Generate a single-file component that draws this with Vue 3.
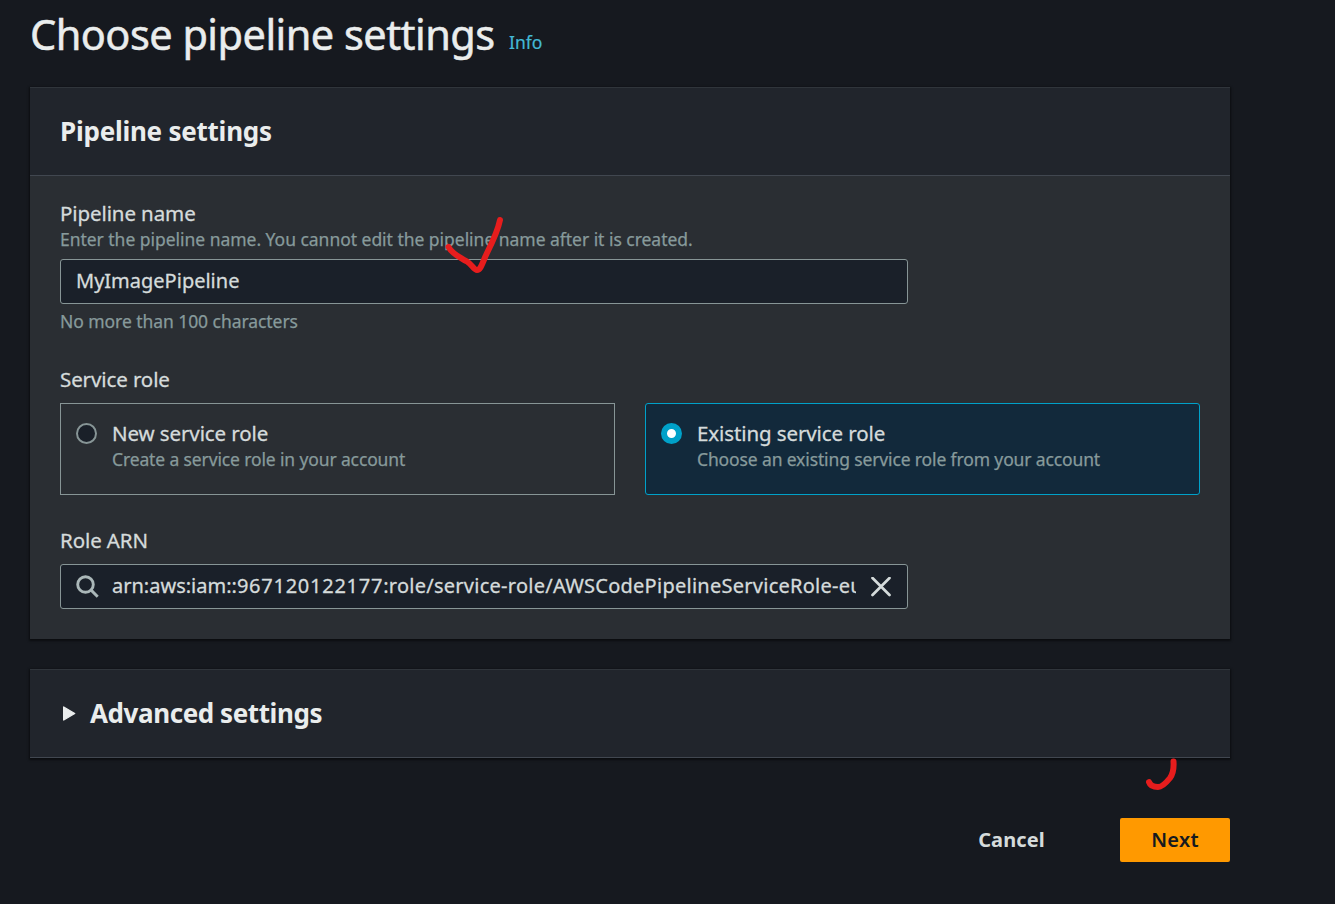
<script setup>
import { ref } from 'vue'

const name = ref('MyImagePipeline')
const role = ref('existing')
const arn = { prefix: 'arn:aws:iam::', account: '967120122177', path: ':role/service-role/AWSCodePipelineServiceRole-eu' }
const tiles = [
  { id: 'new', title: 'New service role', text: 'Create a service role in your account' },
  { id: 'existing', title: 'Existing service role', text: 'Choose an existing service role from your account' },
]
</script>

<template>
  <main class="page">
    <header class="title-row">
      <h1>Choose pipeline settings</h1>
      <a class="info">Info</a>
    </header>

    <section class="panel">
      <div class="panel-head"><h2>Pipeline settings</h2></div>
      <div class="panel-body">
        <div class="label">Pipeline name</div>
        <div class="hint name-hint">Enter the pipeline name. You cannot edit the pipeline name after it is created.</div>
        <div class="field"><span class="name-value">{{ name }}</span></div>
        <div class="hint limit">No more than 100 characters</div>

        <div class="label role-label">Service role</div>
        <div class="tiles">
          <div v-for="t in tiles" :key="t.id" class="tile" :class="{ selected: role === t.id }" @click="role = t.id">
            <span class="radio"></span>
            <div>
              <div class="label tile-title">{{ t.title }}</div>
              <div class="hint tile-text">{{ t.text }}</div>
            </div>
          </div>
        </div>

        <div class="label arn-label">Role ARN</div>
        <div class="field arn-field">
          <svg class="search" width="24" height="24" viewBox="0 0 24 24" fill="none" stroke="#aab7b8" stroke-width="2.9">
            <circle cx="9.500" cy="9.500" r="7.800" />
            <path d="M15.100 15.100L21.700 21.700" />
          </svg>
          <div class="arn-text"><span>{{ arn.prefix }}</span><span class="account">{{ arn.account }}</span><span class="path">{{ arn.path }}</span></div>
          <svg class="close" width="20" height="20" viewBox="0 0 20 20" fill="none" stroke="#d5dbdb" stroke-width="2.7" stroke-linecap="round">
            <path d="M1.500 1L18.500 18M18.500 1L1.500 18" />
          </svg>
        </div>
      </div>
    </section>

    <section class="panel advanced">
      <svg width="14" height="16" viewBox="0 0 14 16" fill="#eaeded" stroke="#eaeded" stroke-width="1.4" stroke-linejoin="round">
        <path d="M1.700 1L12.700 7.500L1.700 14Z" />
      </svg>
      <h2>Advanced settings</h2>
    </section>

    <footer class="actions">
      <button class="cancel">Cancel</button>
      <button class="next">Next</button>
    </footer>

    <svg class="ink" width="1335" height="904" viewBox="0 0 1335 904" fill="none" stroke="#e71d1d" stroke-width="6" stroke-linecap="round" stroke-linejoin="round">
      <path d="M448.500 247C452 254 461 258 467 261.500C472 264.500 474 270 477 270C481 270 483 261 487 253C492 243 498 230 500 220" />
      <path d="M1173.500 761.500C1174 769 1173 774 1170 778C1166 783 1162 787 1158 787C1153 787 1150 785 1149 782" />
    </svg>
  </main>
</template>

<style>
html, body { background: #16191f; }
body { margin: 0; overflow: hidden; }
</style>

<style scoped>
.page {
  position: relative;
  box-sizing: border-box;
  width: 1335px;
  height: 904px;
  padding: 0 105px 0 30px;
  overflow: hidden;
  background: #16191f;
  color: #d5dbdb;
  font-family: "Noto Sans", "Open Sans", sans-serif;
  white-space: nowrap;
}
h1, h2 { margin: 0; color: #eaeded; }
.title-row { display: flex; height: 87px; }
h1 { width: 479px; font-size: 41.500px; font-weight: 400; line-height: 68px; letter-spacing: -0.540px; -webkit-text-stroke: 0.500px currentColor; }
.info { color: #44b9d6; font-size: 17.500px; line-height: 85px; -webkit-text-stroke: 0.200px currentColor; }
.panel { box-shadow: 0 1px 2px 1px rgba(0, 0, 0, 0.5); }
.panel-head { box-sizing: border-box; height: 89px; padding: 0 30px; background: #21252c; border-top: 1px solid #30353b; border-bottom: 1px solid #414750; }
h2 { font-size: 26px; font-weight: 700; line-height: 86px; letter-spacing: -0.240px; }
.panel-body { box-sizing: border-box; height: 463px; padding: 24px 30px 0; background: #2a2e33; }
.label { height: 28px; font-size: 20.500px; line-height: 26px; letter-spacing: -0.100px; -webkit-text-stroke: 0.300px currentColor; }
.hint { color: #879a9b; font-size: 17.500px; line-height: 24px; letter-spacing: -0.030px; -webkit-text-stroke: 0.250px currentColor; }
.name-hint { height: 24px; line-height: 22px; }
.field { box-sizing: border-box; display: flex; align-items: center; width: 848px; height: 45px; margin-top: 7px; padding: 0 15px; border: 1px solid #879596; border-radius: 3px; background: #1a2029; font-size: 20px; line-height: 28px; -webkit-text-stroke: 0.300px currentColor; }
.name-value, .arn-text { padding-bottom: 2px; }
.limit { height: 24px; margin-top: 6px; line-height: 22px; letter-spacing: -0.060px; }
.role-label { margin-top: 32px; }
.tiles { display: grid; grid-template-columns: 1fr 1fr; gap: 30px; margin-top: 9px; }
.tile { box-sizing: border-box; display: flex; height: 92px; padding: 16px 15px; border: 1px solid #879596; }
.tile.selected { border-color: #00a1c9; border-radius: 3px; background: #12293b; }
.radio { box-sizing: border-box; flex: none; width: 21px; height: 21px; margin: 3px 15px 0 0; border: 2px solid #879596; border-radius: 50%; background: #1a2029; }
.selected .radio { border: 6px solid #00a1c9; background: #fff; }
.tile-title { height: 27px; }
.tile-text { letter-spacing: -0.130px; }
.arn-label { margin-top: 32px; }
.arn-field { margin-top: 9px; }
.search { flex: none; margin-right: 12px; stroke-width: 2.900; }
.arn-text { width: 744px; overflow: hidden; }
.account { letter-spacing: 0.750px; }
.path { letter-spacing: 0.260px; }
.close { flex: none; margin-left: 15px; }
.advanced { box-sizing: border-box; display: flex; align-items: center; gap: 14px; height: 89px; margin-top: 30px; padding-left: 32px; background: #21252c; border-top: 1px solid #30353b; border-bottom: 1px solid #414750; }
.advanced h2 { height: 87px; line-height: 86px; letter-spacing: -0.420px; }
.actions { display: flex; justify-content: flex-end; gap: 30px; margin-top: 60px; }
button { height: 44px; width: 110px; padding: 0; border: 0; border-radius: 2px; font: 700 20px/44px "Noto Sans", sans-serif; }
.cancel { width: 159px; margin-right: -1px; background: none; color: #d5dbdb; letter-spacing: 0.100px; }
.next { background: #f90; color: #16191f; font-weight: 600; letter-spacing: 0.300px; }
.ink { position: absolute; left: 0; top: 0; pointer-events: none; }
</style>
